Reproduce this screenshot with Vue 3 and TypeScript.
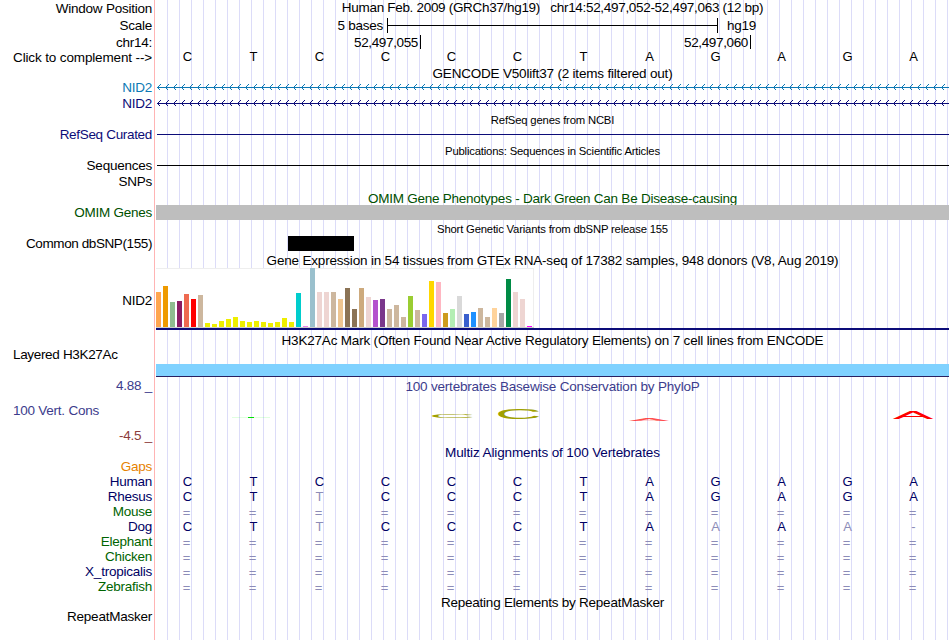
<template>
  <div class="browser">
    <div class="guides"></div>

    <div class="row" style="height: 17px">
      <div class="label">Window Position</div>
      <div class="lane title position">Human Feb. 2009 (GRCh37/hg19)&nbsp;&nbsp; chr14:52,497,052-52,497,063 (12 bp)</div>
    </div>
    <div class="row" style="height: 17px">
      <div class="label">Scale</div>
      <div class="lane scale">
        <span class="scale-text">5 bases</span>
        <span class="scale-bar"></span>
        <span>hg19</span>
      </div>
    </div>
    <div class="row" style="height: 16px">
      <div class="label">chr14:</div>
      <div class="lane ruler">
        <span class="tick first">52,497,055</span>
        <span class="tick">52,497,060</span>
      </div>
    </div>
    <div class="row">
      <div class="label click">Click to complement --&gt;</div>
      <div class="lane bases up">
        <span v-for="(b, i) in sequence" :key="i">{{ b }}</span>
      </div>
    </div>

    <div class="row"><div class="lane title gencode down">GENCODE V50lift37 (2 items filtered out)</div></div>
    <div v-for="gene in genes" :key="gene" class="row gene" :style="{ color: gene }">
      <div class="label">NID2</div>
      <svg class="lane" height="15" width="793" shape-rendering="crispEdges">
        <path d="M1 7.5H793" stroke="currentColor" />
        <path v-for="n in 99" :key="n" :d="`M${n * 8 - 3.5} 4.5L${n * 8 - 6.5} 7.5L${n * 8 - 3.5} 10.5`" fill="none" stroke="currentColor" />
      </svg>
    </div>

    <div class="row"><div class="lane title small">RefSeq genes from NCBI</div></div>
    <div class="row refseq">
      <div class="label curated">RefSeq Curated</div>
      <div class="lane"><div class="line"></div></div>
    </div>
    <div class="row spaced"><div class="lane title small">Publications: Sequences in Scientific Articles</div></div>
    <div class="row">
      <div class="label">Sequences</div>
      <div class="lane"><div class="line"></div></div>
    </div>
    <div class="row"><div class="label down">SNPs</div></div>

    <div class="row omim-title"><div class="lane title down">OMIM Gene Phenotypes - Dark Green Can Be Disease-causing</div></div>
    <div class="row omim">
      <div class="label">OMIM Genes</div>
      <div class="lane omim-bar"></div>
    </div>
    <div class="row" style="height: 16px"><div class="lane title small">Short Genetic Variants from dbSNP release 155</div></div>
    <div class="row">
      <div class="label common">Common dbSNP(155)</div>
      <div class="lane"><div class="snp"></div></div>
    </div>

    <div class="row gtex-title"><div class="lane title wide down">Gene Expression in 54 tissues from GTEx RNA-seq of 17382 samples, 948 donors (V8, Aug 2019)</div></div>
    <div class="row gtex">
      <div class="label down">NID2</div>
      <div class="lane">
        <div class="tissues">
          <span v-for="(t, i) in tissues" :key="i" class="tissue" :style="{ height: t[0] + 'px', background: t[1] }"></span>
        </div>
      </div>
    </div>

    <div class="row h3k-title"><div class="lane title wide">H3K27Ac Mark (Often Found Near Active Regulatory Elements) on 7 cell lines from ENCODE</div></div>
    <div class="row h3k">
      <div class="label left">Layered H3K27Ac</div>
      <div class="lane h3k-bar"></div>
    </div>

    <div class="row cons">
      <div class="label cons-labels">
        <span>4.88 _</span>
        <span class="cons-name">100 Vert. Cons</span>
        <span class="cons-min">-4.5 _</span>
      </div>
      <div class="lane cons-lane">
        <div class="title wide cons-title">100 vertebrates Basewise Conservation by PhyloP</div>
        <svg class="logo" width="793" height="40">
          <path d="M76 15.5H114" stroke="#00ff00" stroke-opacity="0.12" />
          <path d="M92 15.5H98" stroke="#00e000" />
          <text
            v-for="(g, i) in logo"
            :key="i"
            :fill="g.color"
            :transform="`translate(${g.x} ${g.y}) scale(${g.sx} ${g.sy})`"
          >{{ g.base }}</text>
        </svg>
      </div>
    </div>

    <div class="row"><div class="lane title multiz down">Multiz Alignments of 100 Vertebrates</div></div>
    <div class="row"><div class="label gaps">Gaps</div></div>
    <div v-for="s in species" :key="s.name" class="row species">
      <div class="label" :class="{ green: s.green }">{{ s.name }}</div>
      <div class="lane bases">
        <span v-for="(b, i) in s.bases" :key="i" :class="{ faded: isFaded(b, i), gap: b === '=' }">{{ b }}</span>
      </div>
    </div>

    <div class="row spaced"><div class="lane title">Repeating Elements by RepeatMasker</div></div>
    <div class="row"><div class="label up">RepeatMasker</div></div>
  </div>
</template>

<script setup lang="ts">
interface Species {
  name: string
  bases: string
  green?: boolean
}

const sequence = 'CTCCCCTAGAGA'
const unaligned = '='.repeat(12)
const genes = ['#0c78b4', '#0c0c78']

const species: Species[] = [
  { name: 'Human', bases: sequence },
  { name: 'Rhesus', bases: 'CTTCCCTAGAGA' },
  { name: 'Mouse', bases: unaligned, green: true },
  { name: 'Dog', bases: 'CTTCCCTAAAA-' },
  { name: 'Elephant', bases: unaligned, green: true },
  { name: 'Chicken', bases: unaligned, green: true },
  { name: 'X_tropicalis', bases: unaligned },
  { name: 'Zebrafish', bases: unaligned, green: true },
]

// bases that differ from human are drawn in a lighter shade
function isFaded(base: string, i: number) {
  return base !== sequence[i]
}

const logo = [
  { base: 'C', x: 272.8, y: 15.9, sx: 0.645, sy: 0.055, color: '#a0a000' },
  { base: 'C', x: 339, y: 16.8, sx: 0.645, sy: 0.152, color: '#a0a000' },
  { base: 'A', x: 472.8, y: 19, sx: 0.61, sy: 0.026, color: '#ff0000b0' },
  { base: 'A', x: 736.8, y: 17.2, sx: 0.61, sy: 0.1, color: '#ff0000' },
]

// [height, colour] per tissue
const tissues: [number, string][] = [
  [35, '#ffa54f'], [41, '#ee9a00'], [25, '#8fbc8f'], [26, '#8b1c62'], [33, '#ee6a50'], [28, '#ff0000'],
  [32, '#cdb79e'], [4, '#eeee00'], [3, '#eeee00'], [6, '#eeee00'], [8, '#eeee00'], [10, '#eeee00'],
  [6, '#eeee00'], [5, '#eeee00'], [6, '#eeee00'], [5, '#eeee00'], [4, '#eeee00'], [5, '#eeee00'],
  [9, '#eeee00'], [5, '#eeee00'], [34, '#00cdcd'], [1, '#ee82ee'], [59, '#9ac0cd'], [35, '#eed5d2'],
  [35, '#eed5d2'], [35, '#cdb79e'], [28, '#eec591'], [39, '#8b7355'], [18, '#8b7355'], [39, '#cdaa7d'],
  [30, '#eed5d2'], [27, '#b452cd'], [28, '#7a378b'], [18, '#cdb79e'], [22, '#cdb79e'], [10, '#cdb79e'],
  [31, '#9acd32'], [17, '#cdb79e'], [13, '#7a67ee'], [46, '#ffd700'], [45, '#ffb6c1'], [14, '#cd9b1d'],
  [18, '#b4eeb4'], [31, '#d9d9d9'], [13, '#3a5fcd'], [15, '#1e90ff'], [19, '#cdb79e'], [10, '#cdb79e'],
  [19, '#ffd39b'], [14, '#a6a6a6'], [48, '#008b45'], [35, '#eed5d2'], [28, '#eed5d2'], [1, '#ff00ff'],
]
</script>

<style>
body {
  margin: 0;
  background: #fff;
}
</style>

<style scoped>
.browser {
  position: relative;
  width: 950px;
  height: 640px;
  overflow: hidden;
  display: flex;
  flex-direction: column;
  font: 13.5px/15px "Liberation Sans", Arial, sans-serif;
  letter-spacing: -0.24px;
  color: #000;
}

.guides {
  position: absolute;
  inset: 0 1px 0 154px;
  border-left: 1px solid #ffb4b4;
  background: repeating-linear-gradient(to right, #dcdcf8 0 1px, transparent 1px 12px) 12px 0 / 100% 100% no-repeat;
}

.row {
  position: relative;
  flex: none;
  height: 15px;
  display: flex;
  align-items: center;
  white-space: pre;
}

.label {
  width: 152px;
  text-align: right;
}

.lane {
  width: 793px;
  margin-left: auto;
  margin-right: 1px;
}

.title {
  text-align: center;
}

.position {
  padding-bottom: 2px;
  letter-spacing: -0.31px;
}

.wide {
  letter-spacing: -0.19px;
}

.gencode {
  letter-spacing: -0.19px;
}

.small {
  padding-top: 2px;
  font-size: 11.3px;
  letter-spacing: -0.19px;
}

.up {
  padding-bottom: 2px;
}

.down {
  padding-top: 2px;
}

.spaced {
  margin-top: 1px;
}

.click {
  letter-spacing: -0.14px;
}

.curated {
  letter-spacing: -0.32px;
}

.common {
  letter-spacing: -0.4px;
}

.scale {
  display: flex;
}

.scale-text {
  width: 227px;
  text-align: right;
}

.scale-bar {
  width: 329px;
  height: 15px;
  margin: 0 9px 0 4px;
  border: solid #000;
  border-width: 0 1px;
  background: linear-gradient(#000, #000) 0 7px / 100% 1px no-repeat;
}

.ruler {
  display: flex;
  letter-spacing: -0.36px;
}

.tick {
  box-sizing: border-box;
  width: 330px;
  height: 14px;
  padding-right: 2px;
  border-right: 1px solid #000;
  text-align: right;
}

.tick.first {
  width: 265px;
}

.bases {
  display: flex;
  font-size: 13px;
  letter-spacing: 0;
}

.bases span {
  width: 66px;
  text-align: center;
}

.bases span:first-child {
  margin-left: -1.5px;
}

.gene {
  margin-bottom: 1px;
}

.line {
  height: 1px;
  margin-left: 1px;
  background: currentColor;
}

.refseq {
  color: #0c0c78;
}

.omim-title {
  margin-top: 2px;
  color: #005000;
}

.omim {
  color: #005000;
}

.omim-bar {
  height: 15px;
  background: #bebebe;
}

.snp {
  width: 66px;
  height: 15px;
  margin-left: 132px;
  background: #000;
}

.gtex-title {
  height: 17px;
}

.gtex {
  height: 62px;
}

.gtex .lane {
  border-bottom: 2px solid #0c0c78;
}

.tissues {
  box-sizing: border-box;
  width: 378px;
  height: 60px;
  display: flex;
  align-items: flex-end;
  gap: 2px;
  border-bottom: 1px solid #ccc;
  background: #fff;
  box-shadow: inset 0 1px #eee, inset -1px 0 #eee;
}

.tissue {
  flex: none;
  width: 5px;
}

.h3k-title {
  margin-top: 3px;
}

.h3k {
  height: 29px;
  align-items: flex-start;
}

.left {
  box-sizing: border-box;
  margin-top: -1px;
  padding-left: 13px;
  text-align: left;
  letter-spacing: -0.33px;
}

.h3k-bar {
  align-self: flex-end;
  height: 12px;
  border-bottom: 1px solid #2a2060;
  background: #80d2ff;
}

.cons {
  height: 67px;
  color: #3c3c8c;
}

.cons-labels {
  height: 65px;
  display: flex;
  flex-direction: column;
  justify-content: space-between;
}

.cons-name {
  padding-left: 13px;
  text-align: left;
}

.cons-min {
  color: #8c3c3c;
}

.cons-lane {
  align-self: stretch;
}

.cons-title {
  margin-top: 2px;
}

.logo {
  display: block;
  margin-top: 8px;
}

.logo text {
  font-size: 100px;
  letter-spacing: 0;
}

.multiz,
.species {
  color: #000064;
}

.multiz {
  letter-spacing: -0.12px;
}

.gaps {
  color: #e68200;
}

.green {
  color: #006400;
}

.faded {
  color: #8c8cb8;
}

.gap {
  position: relative;
  left: -1px;
  padding-top: 2px;
}
</style>
